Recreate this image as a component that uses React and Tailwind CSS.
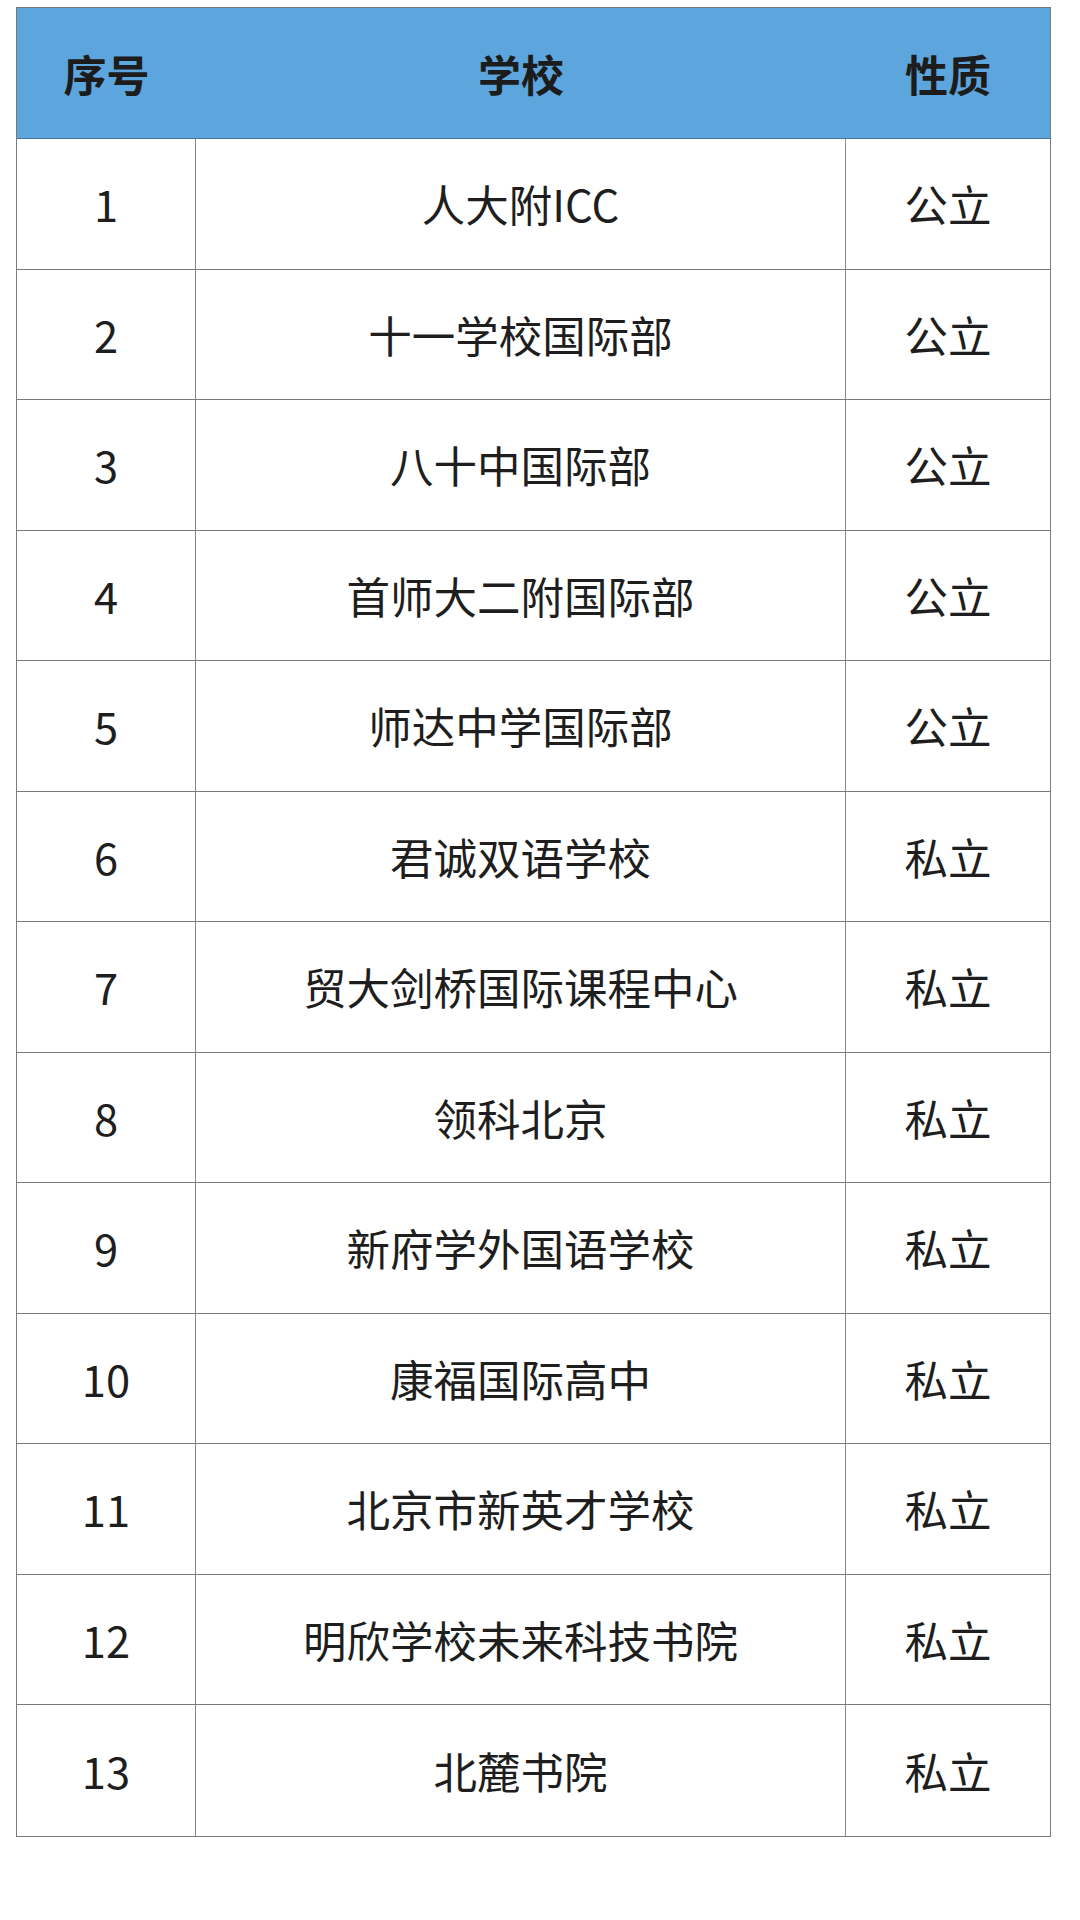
const rows = [
  ["1", "人大附ICC", "公立"],
  ["2", "十一学校国际部", "公立"],
  ["3", "八十中国际部", "公立"],
  ["4", "首师大二附国际部", "公立"],
  ["5", "师达中学国际部", "公立"],
  ["6", "君诚双语学校", "私立"],
  ["7", "贸大剑桥国际课程中心", "私立"],
  ["8", "领科北京", "私立"],
  ["9", "新府学外国语学校", "私立"],
  ["10", "康福国际高中", "私立"],
  ["11", "北京市新英才学校", "私立"],
  ["12", "明欣学校未来科技书院", "私立"],
  ["13", "北麓书院", "私立"],
];

export default function App() {
  return (
    <div
      className="w-[1080px] h-[1920px] bg-white pt-[7px] pl-[16px]"
      style={{ fontFamily: '"Noto Sans CJK SC", "Noto Sans", sans-serif' }}
    >
      <div className="w-[1035px] border-[1.5px] border-[#7a7a7a]">
        <div className="grid grid-cols-[179px_650px_1fr] h-[131px] bg-[#5ca5dd] border-b-[1.5px] border-[#4b7596] text-[43px] font-bold text-[#1c1c1c]">
          <div className="flex items-center justify-center">序号</div>
          <div className="flex items-center justify-center">学校</div>
          <div className="flex items-center justify-center">性质</div>
        </div>
        {rows.map((r, i) => (
          <div
            key={i}
            className={`grid grid-cols-[179px_650px_1fr] h-[130.5px] text-[43.5px] text-[#1e1e1e] ${i < rows.length - 1 ? "border-b-[1.5px] border-[#7a7a7a]" : ""}`}
          >
            <div className="flex items-center justify-center border-r-[1.5px] border-[#8a8a8a]">{r[0]}</div>
            <div className="flex items-center justify-center border-r-[1.5px] border-[#8a8a8a]">{r[1]}</div>
            <div className="flex items-center justify-center">{r[2]}</div>
          </div>
        ))}
      </div>
    </div>
  );
}
